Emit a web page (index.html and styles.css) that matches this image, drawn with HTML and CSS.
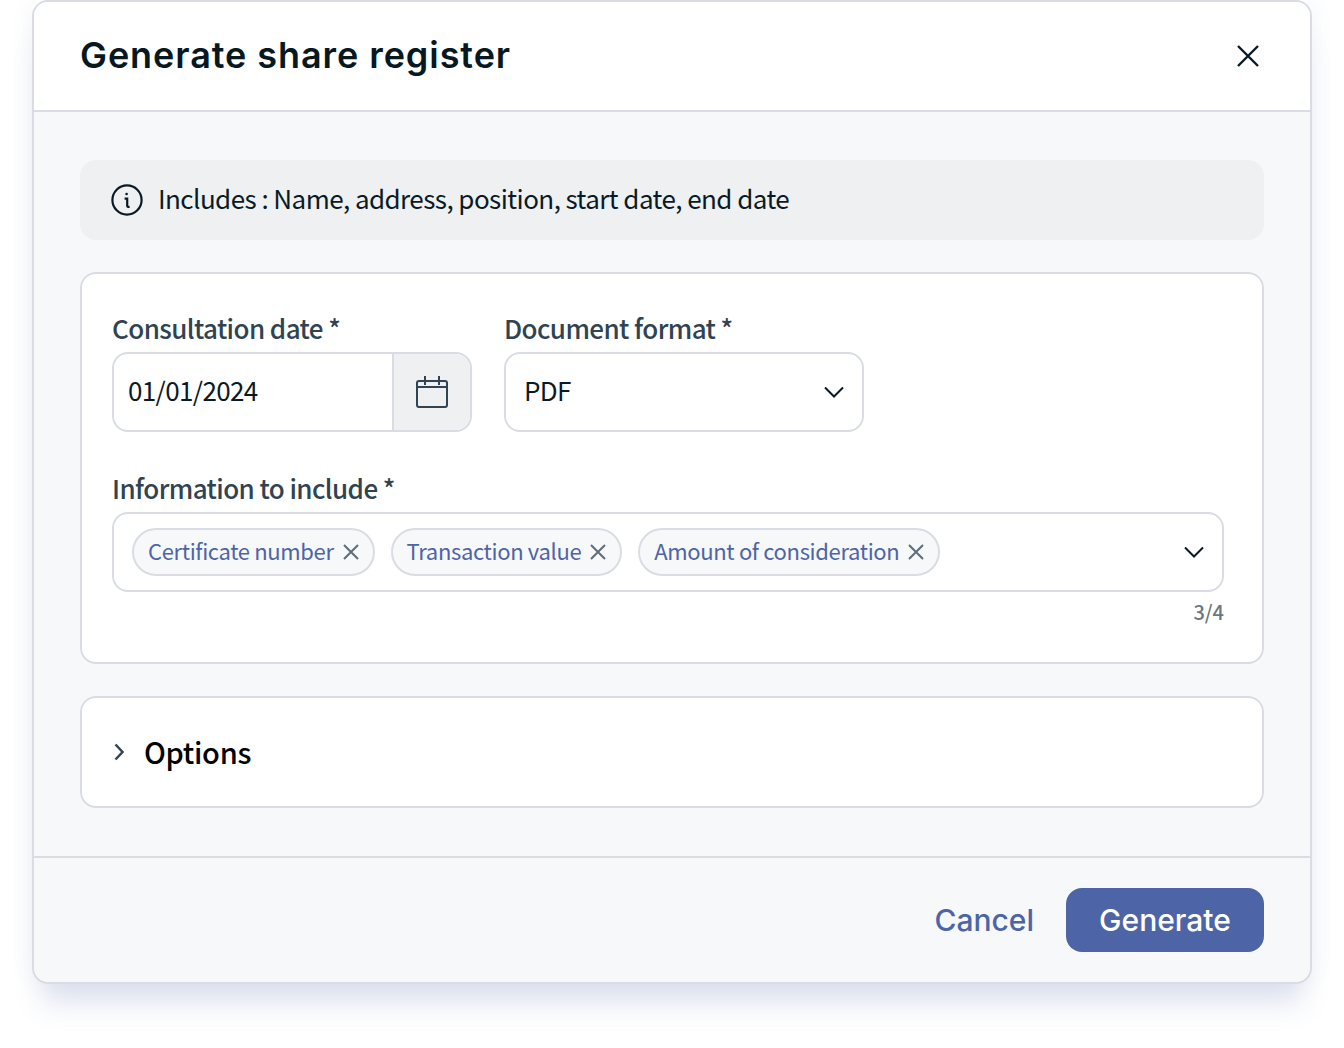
FILE: index.html
```html
<!DOCTYPE html>
<html lang="en">
<head>
<meta charset="utf-8">
<title>Generate share register</title>
<link rel="stylesheet" href="styles.css">
</head>
<body>
<section class="modal">
  <header class="modal-header">
    <h1 class="modal-title">Generate share register</h1>
    <svg class="icon-close" width="24" height="24" viewBox="0 0 24 24"><path d="M2 2 22 22M22 2 2 22"/></svg>
  </header>
  <div class="modal-body">
    <div class="info">
      <svg class="icon-info" width="32" height="32" viewBox="0 0 32 32"><circle cx="16" cy="16" r="14.6"/><path d="M13.6 14.600h2.600v7.200c0 .9.6 1.300 2.400 1.100"/><circle class="dot" cx="15.600" cy="10" r="1.300"/></svg>
      <span class="lift">Includes : Name, address, position, start date, end date</span>
    </div>
    <div class="card form-card">
      <div class="row">
        <div class="field">
          <label class="label">Consultation date *</label>
          <div class="control date">
            <span class="date-value lift-more">01/01/2024</span>
            <span class="date-btn">
              <svg width="32" height="32" viewBox="0 0 32 32"><rect x="1" y="5" width="30" height="26" rx="2"/><path d="M1 11h30M9 0v9M23 0v9"/></svg>
            </span>
          </div>
        </div>
        <div class="field">
          <label class="label">Document format *</label>
          <div class="control select">
            <span class="lift-more">PDF</span>
            <svg class="chev" width="20" height="12" viewBox="0 0 20 12"><path d="M1 1.500 10 10.500 19 1.500"/></svg>
          </div>
        </div>
      </div>
      <div class="field-wide">
        <label class="label">Information to include *</label>
        <div class="control multi">
          <span class="tag"><span class="lift">Certificate number</span><svg width="16" height="16" viewBox="0 0 16 16"><path d="M1 1 15 15M15 1 1 15"/></svg></span>
          <span class="tag"><span class="lift">Transaction value</span><svg width="16" height="16" viewBox="0 0 16 16"><path d="M1 1 15 15M15 1 1 15"/></svg></span>
          <span class="tag"><span class="lift">Amount of consideration</span><svg width="16" height="16" viewBox="0 0 16 16"><path d="M1 1 15 15M15 1 1 15"/></svg></span>
          <svg class="chev chev-end" width="20" height="12" viewBox="0 0 20 12"><path d="M1 1.500 10 10.500 19 1.500"/></svg>
        </div>
        <div class="counter">3/4</div>
      </div>
    </div>
    <div class="card options">
      <svg width="12" height="18" viewBox="0 0 12 18"><path d="M3.500 1.500 10.500 9 3.500 16.500"/></svg>
      <span class="options-text">Options</span>
    </div>
  </div>
  <footer class="modal-footer">
    <span class="btn-cancel">Cancel</span>
    <span class="btn-primary">Generate</span>
  </footer>
</section>
</body>
</html>
```
FILE: styles.css
```css
* { box-sizing: border-box; }
html, body { margin: 0; background: #fff; }
body {
  height: 1048px;
  overflow: hidden;
  padding: 0 32px;
  font-family: "Noto Sans CJK JP", "Noto Sans", sans-serif;
  color: #0a1a24;
}
svg { fill: none; stroke: currentColor; flex: none; display: block; }
.lift { padding-bottom: 4px; }
.lift-more { padding-bottom: 6px; }
.modal {
  height: 984px;
  border: 2px solid #d9dde3;
  border-radius: 16px;
  background: #f7f8fa;
  display: flex;
  flex-direction: column;
  box-shadow: 0 0 24px rgba(76, 100, 166, 0.07), 0 30px 28px -10px rgba(76, 100, 166, 0.17);
}
.modal-header {
  height: 110px;
  flex: none;
  background: #fff;
  border-bottom: 2px solid #d9dde3;
  border-radius: 14px 14px 0 0;
  padding: 0 50px 0 46px;
  display: flex;
  align-items: center;
  justify-content: space-between;
}
.modal-title {
  margin: 0 0 2px;
  font: 600 36px/44px Inter, sans-serif;
  letter-spacing: 0.93px;
  color: #07181f;
}
.icon-close { stroke-width: 2.4; stroke: #0a1a24; }
.modal-body {
  flex: 1;
  padding: 48px 46px 48px;
  display: flex;
  flex-direction: column;
  gap: 32px;
}
.info {
  height: 80px;
  background: #eff0f2;
  border-radius: 16px;
  padding: 0 31px;
  display: flex;
  align-items: center;
  gap: 15px;
  font-size: 26px;
  letter-spacing: -0.56px;
  line-height: 36px;
}
.icon-info { stroke-width: 2.2; }
.icon-info .dot { fill: currentColor; stroke: none; }
.card {
  background: #fff;
  border: 2px solid #d9dde3;
  border-radius: 16px;
}
.form-card {
  height: 392px;
  padding: 36px 30px 0;
}
.row { display: flex; gap: 32px; }
.field { width: 360px; }
.label {
  display: block;
  font-size: 26px;
  letter-spacing: -0.58px;
  line-height: 36px;
  font-weight: 500;
  color: #2f4352;
  margin-bottom: 6px;
}
.control {
  height: 80px;
  background: #fff;
  border: 2px solid #d9dde3;
  border-radius: 16px;
  display: flex;
  align-items: center;
  font-size: 26px;
  letter-spacing: -0.62px;
}
.date { overflow: hidden; }
.date-value { flex: 1; padding-left: 14px; }
.date-btn {
  width: 78px;
  height: 100%;
  background: #eff0f2;
  border-left: 2px solid #d9dde3;
  display: flex;
  align-items: center;
  justify-content: center;
  color: #2f4352;
}
.date-btn svg { stroke-width: 2; }
.select { justify-content: space-between; padding: 0 18px 0 18px; }
.chev { stroke-width: 2; stroke: #0a1a24; }
.field-wide { margin-top: 38px; margin-right: 8px; }
.multi { padding: 0 18px; gap: 16px; }
.chev-end { margin-left: auto; }
.tag {
  height: 48px;
  padding: 0 14px;
  border: 2px solid #d9dde3;
  border-radius: 24px;
  background: #f7f8fa;
  color: #4d64a6;
  font-size: 22px;
  letter-spacing: -0.35px;
  display: flex;
  align-items: center;
  gap: 9px;
}
.tag svg { stroke: #5d6d79; stroke-width: 2; }
.counter {
  text-align: right;
  font-size: 20px;
  line-height: 28px;
  font-weight: 500;
  color: #6a7781;
  margin-top: 6px;
}
.options {
  height: 112px;
  padding: 0 30px;
  display: flex;
  align-items: center;
  gap: 20px;
  font-size: 29px;
  letter-spacing: -0.3px;
  font-weight: 500;
  color: #000;
}
.options-text { padding-bottom: 2px; }
.options svg { stroke: #2f4352; stroke-width: 2.4; }
.modal-footer {
  flex: none;
  height: 126px;
  border-top: 2px solid #d9dde3;
  padding: 30px 46px 0 0;
  display: flex;
  justify-content: flex-end;
  align-items: flex-start;
  gap: 32px;
  font: 500 30px/64px Inter, sans-serif;
}
.btn-cancel { color: #4d64a6; }
.btn-primary {
  width: 198px;
  height: 64px;
  border-radius: 16px;
  background: #4d64a6;
  color: #fff;
  text-align: center;
}
```
